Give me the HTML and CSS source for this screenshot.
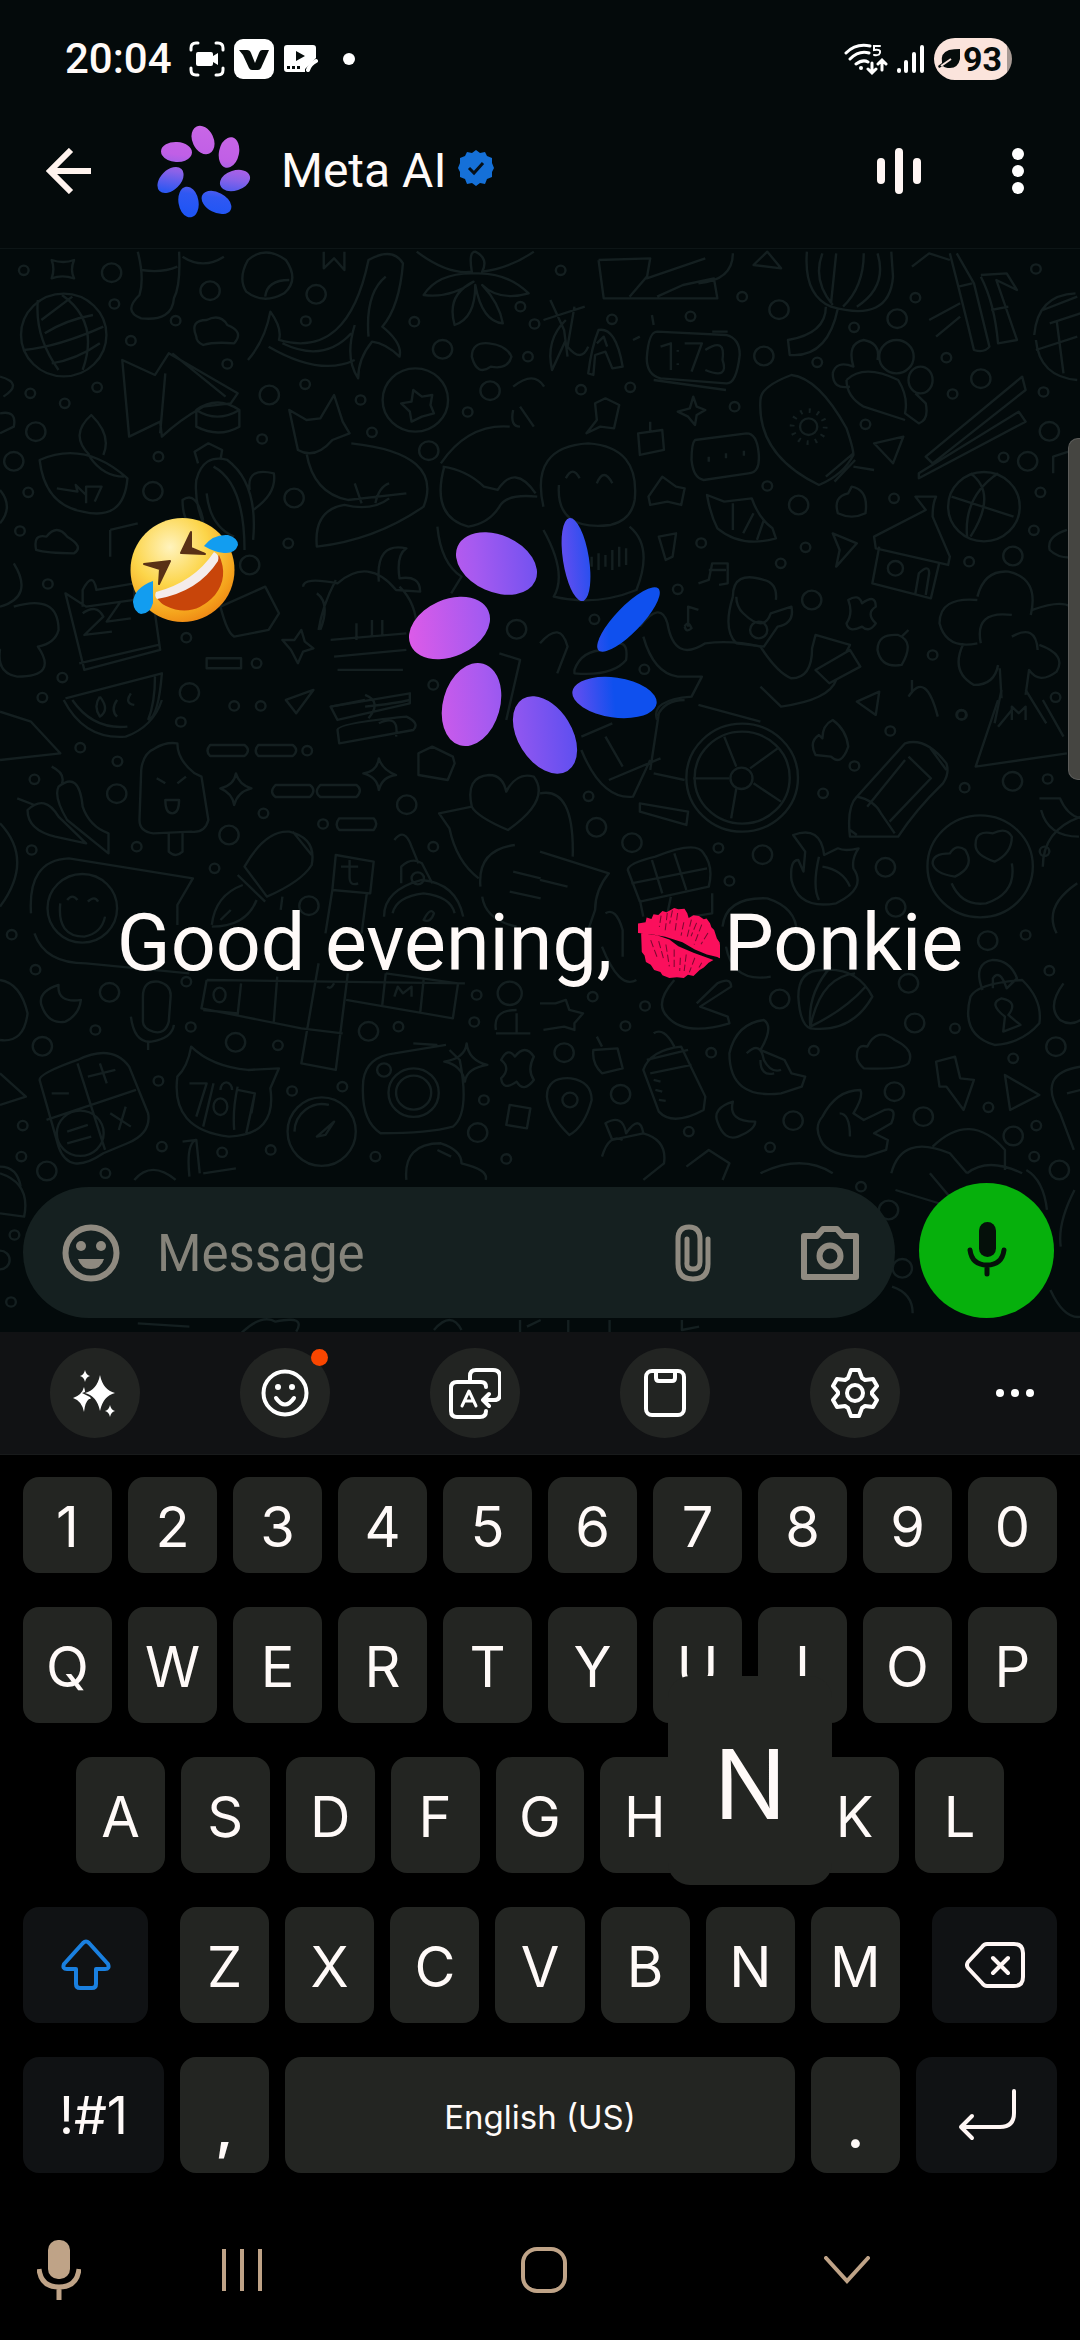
FILE: index.html
```html
<!DOCTYPE html>
<html lang="en">
<head>
<meta charset="utf-8">
<meta name="viewport" content="width=device-width, initial-scale=1">
<title>Meta AI</title>
<link rel="stylesheet" href="styles.css">
</head>
<body>
<div class="status">
  <time class="clock">20:04</time>
  <svg class="rec" viewBox="0 0 36 36" width="36" height="36" fill="none" stroke="#fff" stroke-width="3" stroke-linecap="round"><path d="M2 9V7Q2 2 7 2H9M27 2h2q5 0 5 5v2M34 27v2q0 5-5 5h-2M9 34H7q-5 0-5-5v-2"/><path d="M9 11h13q2 0 2 2v2l5-3v12l-5-3v2q0 2-2 2H9q-2 0-2-2V13q0-2 2-2z" fill="#fff" stroke="none"/></svg>
  <svg class="vbox" viewBox="0 0 40 40" width="40" height="40"><rect width="40" height="40" rx="9" fill="#fff"/><path d="M5 11h8q3 0 4 3l4 10 4-10q1-3 3-3h7l-8 18q-1 2-3 2h-6q-2 0-3-2L9 16z" fill="#060c0b"/></svg>
  <svg class="clip" viewBox="0 0 34 28" width="34" height="28"><path d="M3 0h26q3 0 3 3v10L21 24v3H3q-3 0-3-3V3q0-3 3-3z" fill="#fff"/><path d="M12 6l9 5-9 5zM3 21h3v3H3zM8 21h3v3H8zM13 21h3v3h-3z" fill="#060c0b"/><path d="M24 25q2-6 8-9" fill="none" stroke="#fff" stroke-width="4" stroke-linecap="round"/></svg>
  <span class="more-dot"></span>
  <svg class="wifi" viewBox="0 0 44 34" width="44" height="34" fill="none" stroke="#fff" stroke-width="3" stroke-linecap="round"><path d="M2 11Q12 1 26 4M6 17q9-9 19-6M12 22q7-5 12-2"/><circle cx="17" cy="26" r="2" fill="#fff" stroke="none"/><path d="M28 21v9m-4-3l4 4 4-4M38 28v-9m-4 3l4-4 4 4"/><path d="M36 4h-6v4q5-1 6 1 1 5-6 4" stroke-width="2"/></svg>
  <svg class="signal" viewBox="0 0 28 30" width="28" height="30" stroke="#fff" stroke-width="4" stroke-linecap="round"><path d="M3 26v1M10 18v9M18 10v17M26 3v24"/></svg>
  <span class="battery"><svg viewBox="0 0 22 20" width="22" height="20"><path d="M22 0v10q-2 9-10 9-5 0-7-2l-4 2-1-2 4-3Q2 4 11 1q5-1 11-1z" fill="#060c0b"/><path d="M3 17l10-7" stroke="#fbe4dc" stroke-width="2"/></svg>93</span>
</div>
<header class="appbar">
  <button class="icon-btn" aria-label="Back"><svg viewBox="0 0 46 46" width="46" height="46" fill="none" stroke="#fff3ee" stroke-width="6"><path d="M45 23H5M25 2L4 23l21 21"/></svg></button>
  <svg class="avatar" viewBox="156 124 96 96" width="96" height="96"><defs><linearGradient id="ga" gradientUnits="userSpaceOnUse" x1="215" y1="130" x2="203" y2="216"><stop offset="0" stop-color="#c866e6"/><stop offset=".35" stop-color="#c05fe6"/><stop offset=".55" stop-color="#8a62e8"/><stop offset=".78" stop-color="#2f58f2"/><stop offset="1" stop-color="#1f55f5"/></linearGradient>
    <clipPath id="ca"><ellipse cx="203" cy="141" rx="10.500" ry="15" transform="rotate(-25 203 141)"/><ellipse cx="229" cy="153.500" rx="10" ry="15.500" transform="rotate(12 229 153.500)"/><ellipse cx="235" cy="181.500" rx="15.500" ry="10" transform="rotate(-18 235 181.500)"/><ellipse cx="216.500" cy="203.500" rx="16" ry="10" transform="rotate(28 216.500 203.500)"/><ellipse cx="188.500" cy="203" rx="10" ry="15.500" transform="rotate(-10 188.500 203)"/><ellipse cx="170.500" cy="181" rx="15.500" ry="10" transform="rotate(-45 170.500 181)"/><ellipse cx="176.500" cy="153" rx="15.500" ry="10" transform="rotate(3 176.500 153)"/></clipPath></defs><rect x="156" y="124" width="96" height="96" fill="url(#ga)" clip-path="url(#ca)"/></svg>
  <h1 class="title">Meta AI</h1>
  <svg class="badge" viewBox="0 0 36 38" width="36" height="38"><path d="M18 1l4 3 5-1 2 4 5 2v5l2 5-2 4v5l-5 2-2 5-5-1-4 3-4-3-5 1-2-5-5-2v-5l-2-4 2-5V9l5-2 2-4 5 1z" fill="#1570d8"/><path d="M11 19l5 5 9-10" fill="none" stroke="#061018" stroke-width="3"/></svg>
  <button class="icon-btn push" aria-label="Voice"><svg viewBox="0 0 46 48" width="46" height="48" stroke="#fff6f4" stroke-width="8" stroke-linecap="round"><path d="M5 15v18M23 5v38M41 15v18"/></svg></button>
  <button class="icon-btn kebab" aria-label="More options"><svg viewBox="0 0 12 48" width="12" height="48" fill="#fff"><circle cx="6" cy="7" r="6"/><circle cx="6" cy="24" r="6"/><circle cx="6" cy="41" r="6"/></svg></button>
</header>
<main class="chat">
  <svg class="wallpaper" viewBox="0 249 1080 1083" preserveAspectRatio="xMidYMid slice" aria-hidden="true">
    <defs>
      <marker id="s" markerUnits="userSpaceOnUse" markerWidth="60" markerHeight="60" viewBox="-30 -30 60 60" refX="0" refY="0"><circle r="14" class="doodle"/></marker>
      <marker id="b" markerUnits="userSpaceOnUse" markerWidth="80" markerHeight="80" viewBox="-40 -40 80 80" refX="0" refY="0"><circle r="28" class="doodle"/></marker>
    </defs>
    <g class="doodle" transform="translate(0 240) scale(.3444 .3333)">
      <path class="small" d="M69 91L332 192 510 242 380 302 660 372 888 243 1203 245 1511 200 1552 252 1533 350 88 460 282 442 188 490 886 433 1047 480 1080 577 1358 516 761 597 460 650 82 757 58 873 837 910 139 1032 541 1193 745 1270 181 1313 123 1373 680 1398 757 1398 1258 1335"/>
      <path class="big" d="M324 98L610 152 918 163 1285 328 782 465 1423 452 104 575 1245 632 40 664 444 754 854 774 725 975 550 1358 1500 1168"/>
      <circle cx="185" cy="285" r="124"/><circle cx="1206" cy="480" r="95"/>
      <path d="M150 60q35 12 65 0-12 30 0 55-35-12-65 0 10-28 0-55zM120 240l90-70M130 280q60-40 140-55M70 330q100-10 230-70M150 370q70-10 140-60M110 180q-10 110 60 210M180 165q110 80 60 225M400 35q20 80 5 130-50 50 5 70 90 10 95-60 20-40 15-140M410 90q60 10 105-10M530 50q60 40 120 0"/>
      <path d="M720 60q50-45 110 0 40 60-5 100-60 35-110-5-25-40 5-95zM770 170q5-50 70-50M940 35v50l30-30 30 35V35M570 290q-20-50 30-50 40-20 60 15 50 20 20 55-60-5-90 5-20-10-20-25zM720 360q50-60 65-145 35 50 25 85 200 60 260-240 70-40 100 10-10 130-60 190 60 50 50 90-40-40-80-45-40 50-40 110-40-60-10-160M780 320q150 90 250 40M820 310q120 60 200-30M1070 290q-10-130 50-180"/>
      <path d="M1210 35q90 70 160 60-10-60 10-60 40 20 20 60 80-10 150-60M1370 100q-100 0-140 65 80 10 145-40-80 40-55 130 60-20 60-120 20 110 80 115-10-60-60-115 50 50 135 25-60-60-145-60zM1370 350q0-45 50-40 50 5 65 40-10 40-60 30-40 30-55-30zM1165 490l30-5 5-35 25 20 30-5-5 30 10 25-35 10-30 15-5-30z"/>
      <path d="M355 360l95 45 40-65 200 120-20 30-80 10q-70 40-120 90l-5-45-90 45zM480 400l-15 180M500 340l155 130M570 510q60-45 125 0v50q-60 35-125 0zM570 510q60 40 125 0M115 660q130-60 255 55-10 130-130 100-110-20-125-155zM260 645q-60-60 5-120 60 60 35 120M260 650q40 60 100 60M165 745l60 10-5-20 30 30M250 790v-50h45l-20 45"/>
      <path d="M570 720q20-80 90-60 90 70 75 240M600 760q10 100 80 130M570 720q-10 100 60 200M620 680q90 50 90 250M725 750q-10-70 70-50 10 60-60 110M590 840q-20-90-60-60 0 80 50 90M575 670l-10-35 40-25 40 20-5 30M840 510l50 30 40-5 40-70 25 80 20 35-50 20q-50 60-100 30zM890 640q20 120 120 140l170-20M1020 610q270 30 210 190-140 100-310 120-10-110 80-125 80 20 130-20M1050 790l-20-60M1090 790q10-50 40-60M1280 670q80-120 200-110M1285 680q70 10 120 60l40 10q50-80 110 10M1290 680q-40 150 70 180 60-10 90-60 20-40 110-30M1270 860q10 110 70 150l-30 50"/>
      <path d="M105 930q-10-50 30-40 30-40 60 0 50 30 20 50-80 0-110-10zM320 870l80-20M320 870v80M190 1060l60 40 140-20 60 40 15 110-220 60zM240 1100v-50q30-60 40 0l110-20v60M230 1270l230-55M240 1120q40-30 60 10l-55 55 80-10M350 1085l-40 60 70-10M640 1100l130-60 40 80-30 50-100 20q-20-10-40-90zM880 1040q0-30 100-10 90-80 170 20l70 5q0-50-60-40-10-70 20-90-90-20-80 100M920 1060q40 30 10 110M975 1020q-40 80-50 150M1160 1040q50 50 50 130M960 1200l220-20M970 1250l210-20M980 1290h190M1035 1150v50M1080 1140v50M1110 1140v50"/>
      <path d="M820 1200l35 0 20-30 10 35 25 20-30 10-15 35-20-40zM600 1255h100v30H600zM0 1100q100-30 40-130M40 1100q130-40 130 70-10 40-60 50 60 90-60 90-60-10-50-80-50-40-60 10M190 1375l280-75q-10 130-40 140M450 1310q0 80-20 130M290 1370q-20 30 0 60 30-20 0-60M340 1380q-20 30 0 50M380 1360q-20 30 10 35M830 1380l80-30-50 70zM960 1400l230-40v30l-210 50zM1060 1365q50 20 10 70M1450 1240l60 20-40 180"/>
      <path d="M0 410q70 20 10 60M0 520q50-10 40 40L0 580M0 750q40 50 0 100M1490 440q60-50 90 0M1510 500l40 60M1510 560q-30 0-20-50"/>
    </g>
    <g class="doodle" transform="translate(540 240) scale(.3444 .3333)">
      <path class="small" d="M60 91L587 170 1090 173 1440 87 209 238 437 229 912 262 805 367 1180 353 119 449 262 442 565 500 1198 462 1462 456 945 553 1346 652 660 738 1028 775 1453 757 468 909 771 922 1434 871 1246 965 699 970 400 1048 158 1138 1140 1245 303 1288 1497 1372 1225 1425"/>
      <path class="big" d="M694 209L1037 236 650 348 1280 416 1479 574 1416 664 751 795 1373 948 789 1080"/>
      <path d="M170 60l150-5-10 60 170-60M170 60l15 115h330l-10-60-90 20-75 35M260 170l50-60M560 40q0 80-100 90M620 75l80 10-40-50zM775 35q-10 130 70 165 170 50 180-90l-5-75M820 40q-30 80 30 155M860 40l-15 150M940 40q0 100-60 160M980 40q30 100-60 160M830 200q0 80-110 100l5 45q110 10 140-140M1080 80l50-40 60 20M1190 40q40 160 70 290 30 10 45-10L1260 130l-50-90M1215 140l40-10M1280 110q40 80 50 200l55-10-60-180 60 30-30-50-75 5M1130 240l90-50M1150 290l70-60M1310 210l50-10"/>
      <path d="M10 240l120-40M30 180l40 90 10 80M75 240q-60 60-40 150l40-90M100 200l-20 120q40 50 60 0M140 400q10-80 30-130 50-10 70 110l-30 5-20-50-30 10-5 60zM165 310l20-20 10 30M340 275l200 10q40 10 40 60-10 90-40 85l-190-15q-40-10-40-60 5-80 30-80zM330 420l210 30M500 275h45M350 320l30-10v80M400 330v5M400 370v5M420 310h50l-30 85M480 330q60-40 50 30 20 60-50 30M290 290l-20 10M325 225l5 30"/>
      <path d="M640 480q0-40 90-75 80 10 160 160 20 60 20 80-30 60-100 90-180-90-170-255zM910 640l-80 70M915 660l-60 65M910 680l60 10M755 560a25 25 0 1 1 50 0 25 25 0 1 1-50 0M850 400q10-40 60-20-20-70 30-80 50 10 40 60M850 400q0 50 50 40M985 350a50 50 0 1 1 100 0 50 50 0 1 1-100 0M1070 420a35 40 0 1 1 70 0 35 40 0 1 1-70 0M890 420q50-50 150 0 30 50 20 100l40 30q30-10 20-60l-30-30M890 420q0 50 50 80l120 40M970 610l85-20-30 80zM1120 650l280-240 10 40-270 220zM1100 700l290-185 20 30-310 170z"/>
      <circle cx="780" cy="560" r="48" stroke-dasharray="6 19" stroke-width="14"/>
      <path d="M10 800q-40-180 130-190 150 10 135 170-10 60-70 75-160 20-150-120M75 715q20-40 40 0M165 730q20-50 45 0M160 490l30-15 40 20-15 70-40-5-40 20 30-40zM400 515l35-10 10-35 10 30 25 10-25 15-5 30-20-25zM285 580l70-10 5 60-70 15zM320 545v30M450 600l150-20q30 0 35 60 5 60-30 60l-130 20q-30-5-35-60 0-50 10-60zM490 650v15M540 640v15M592 632v15M315 770l40-60 40 30 25 5-10 50-40-10-50 10zM485 765l50 20 80-10q20 60 60 90l10 30q-100 30-170-30-20-40-30-100zM560 790v80M620 820l-30 60M650 840l-20 60M865 820q-15-50 30-60l10-20q50 10 40 80-40 20-80 0zM850 880l70 30-60 70 10-50z"/>
      <path d="M1185 800a104 104 0 1 1 208 0 104 104 0 1 1-208 0M1195 770l180 60M1250 700q80 60 0 190M1330 700q-100 70-90 190M970 890l150-80-30-40h60q-10 20-10 60l50 120-5 25-210-50zM985 920l-20 110 170 45 25-110M1010 985a22 22 0 1 1 44 0 22 22 0 1 1-44 0M1090 1060l10-60q30-30 30 0l-10 65M1270 1070q20-80 90-75 90 20 65 130M1270 1080q-110-10-110 70 20 80 110 60M1280 1210q-20-100 90-85M1430 1110q80-30 110-10M1370 1190q70-40 75 40M1450 1215q80 30 50 80-50 40-80-5l-10 75M1330 1275q-10 60-70 60-70-40-30-125M1335 1285l5 90"/>
      <path d="M10 870q70 130 30 200 120 30 240-20 50-130-20-190M150 950v30M170 940v50M190 945v35M210 930v60M230 920v60M250 925v50M345 890l50-10-10 70-20 10zM460 1030l30-10 10-50h45v60l-25 5M490 990h50M560 1070q0-80 90-50 40 10 35 60M560 1070q-30 100 10 140l80 10 40-60q50-10 40-60-30 10-60 20-20 60-80 0-20-20-20-50M610 1170a25 25 0 1 1 50 0 25 25 0 1 1-50 0M895 1080q30-20 40 10 40-30 40 10-30 20 0 50-20 30-40 10-40 20-45-10 20-30 5-70zM430 1160v-60l30 10M420 1160q10-20 20 5-15 15-20-5"/>
      <path d="M290 1160q60-80 80-10 20 120 110 60 80-10 160 10 50 80 90 95 60 0 60-90l10-40 100 30-10 20M300 1190q30 110 100 120h70l-30 60q-120 10-100 70M640 1340l60 60q140-20 160-80M800 1290l100-60 30 50-90 50zM980 1230q0-50 60-45 50 20 10 90-60 10-70-45zM1050 1190l20-20M920 1385l65-30-10 70zM1070 1370q50-80 85 60M1080 1320v40M1340 1350l-20 100M1410 1350l60 100M1370 1440v-40l20 20 20-20v40M460 1395l180 50M100 1290q20-60 90-60 70-50 60 30-40 50-150 40zM0 1210q60-70 80 10l-30 80"/>
      <path d="M1435 285q10-120 120-125M1440 300q10 110 120 120M1460 210l100-40M1480 250l90-30M1440 330l120-40M1500 240l20 160M1490 700v-50l60-20M1530 870q-60 20-50 60 30 30 80 20"/>
    </g>
    <g class="doodle" transform="translate(0 700) scale(.3444 .3333)">
      <path class="small" d="M525 66L233 143 341 184 892 152 100 238 938 372 765 340 92 450 397 440 1258 440 623 505 34 704 103 809 541 845 277 990 554 981 1384 885 1377 966 1157 980 807 1036 460 1143 848 1173 994 1160 1405 1200 66 1277 470 1340 645 1357 786 1350 1090 1370 62 1370 1470 1377 306 1420"/>
      <path class="big" d="M339 281L665 405 1181 314 897 617 318 877 684 1027 1070 994 123 1039 1387 1298 136 1413"/>
      <path d="M185 0q60 120 180 110 80-30 105-110M210 0q60 90 160 80M0 35l90 30 85 95-175 20M450 145q30-20 65-15 0 50 50 90l20 10 20 130q-10 40-50 35l-110 5q-40-5-40-40l5-150q5-50 40-65zM490 395v60q20 20 40 0v-60M455 235l25 15M540 230l-25 20M480 300h40q0 40-20 40t-20-40zM610 135h100q20 15 0 33H610q-15-15 0-33zM750 135h100q20 15 0 33H750q-15-15 0-33zM800 255h100q20 15 0 36H800q-20-15 0-36zM930 255h105q20 15 0 36H930q-20-15 0-36zM985 355h100q15 15 0 35H985q-15-15 0-35z"/>
      <path d="M640 265q40-10 45-45 10 35 45 45-40 10-50 50-5-35-40-50zM1055 220q40-5 45-45 10 35 50 50-40 5-50 45-5-40-45-50zM1215 160l40-20 60 30 5 20-20 50-85-15zM1370 320q-20-90 50-95 40 0 50 50 30-60 80-45 50 70-75 160-90-40-105-70zM1370 320l-95 20 30 45q20 100 85 150M980 90q0-20 200-40 40 20 20 40l-215 40zM1100 70q60-30 50 40M960 20l100-20M1060 20q90-10 130-20"/>
      <path d="M90 640q-10-160 110-165l360 60-45 80 0 60M100 700q30 90 150 90l300 30M138 625a101 103 0 1 1 202 0 101 103 0 1 1-202 0M175 610q-10 100 70 100 50-10 60-60M195 600q15-20 30 0M255 605q20-20 30 0M80 330q50-50 90 20l80 80-90-20q-80-20-80-80zM170 260q60-50 70 60 20 60 75 80v60l-120-100q-40-70-25-100zM150 200q40 20 30 50M50 295l50 20M710 500q60-110 130-105 80 20 65 100-30 50-130 95zM850 395l55 70M690 525l80 80M615 675q10-90 90-120M615 680q100 0 130-80M640 660l30-30M820 590l-5 40"/>
      <path d="M975 465l110 20-10 95-110-10zM965 570l-20 130M1065 580l-15 120M600 840l750 10M590 930l100 10M600 840l-15 85 290 60 120 15M700 850l-10 95M805 830l-10 135M925 790l-50 300 100 20 35-290M1120 820l210 30-15 105-310-55M1120 820l-10 95M1230 840l-10 100M990 500h50M1015 480v50q0 30 25 20M970 850q-10 20-20 10M1145 890l10-30 15 20 25-20v30M620 885a16 20 0 1 1 35 0 16 20 0 1 1-35 0M1115 650q0-80 110-110 100 10 120 110M1140 640q10-50 90-60 80 10 90 60M1165 550v-50q30-30 60-10l30 60M1195 535a18 18 0 1 1 36 0 18 18 0 1 1-36 0M1145 420q30-40 50 20l20 50M1230 660q20-40 30-20-10 30-30 20zM1395 560q-10-110 100-125M1400 590q10 70 100 90M1490 515l80 20M1480 575l90 20"/>
      <path d="M170 855q-60 20-50 60 20 60 70 50 40-20 45-65-70 10-65-45zM0 840q60 10 80 100-10 90-80 80M415 890q0-50 45-45 40 10 35 50l-5 70q-10 40-45 30-30-10-30-30zM380 950q10 80 60 75 60-10 65-50M430 1025v25M115 1140q0-20 110-60 100-50 150 20l55 140q10 60-60 90l-70 30q-100 70-130-20zM225 1090l80 260M135 1260l260-90M255 1130l80-20M290 1090l20 60M150 1180h50M320 1240l60 40M365 1220l-20 70M165 1300a68 68 0 1 1 136 0 68 68 0 1 1-136 0M195 1295l60-20M195 1330l70-20M0 1120l75 70-75 25"/>
      <path d="M555 1040q60 60 165 70l90-5-25 60q20 140-120 145-170-20-150-180 30-30 40-90zM550 1150h50l-30 100M620 1150l-30 130M690 1160q-15 70-10 130M690 1170l50 10-25 120M740 1180l-10 60M640 1170a15 20 0 1 1 34 0M620 1220a20 25 0 1 1 40 0 20 25 0 1 1-40 0M835 1295a99 103 0 1 1 198 0 99 103 0 1 1-198 0M855 1295a80 85 0 0 1 100-80M920 1310l50-45-25 40zM1055 1140q10-70 90-80l150-25M1055 1140q-10 120 50 160 140 0 210-20 50-40 20-200l-30-30M1200 1030l70 5M1128 1178a73 73 0 1 1 146 0 73 73 0 1 1-146 0M1150 1178a51 51 0 1 1 102 0 51 51 0 1 1-102 0M1095 1110a20 20 0 1 1 40 0 20 20 0 1 1-40 0M1290 1085q60-10 65-55 5 50 60 65-60 10-65 50-10-50-60-60z"/>
      <path d="M1455 1080q20-40 40-10 30-40 55 0-20 40 0 70-30 40-50 5-40 30-45-10 30-30 0-55zM1480 1215l60 10-10 60-60-10zM1445 880a35 35 0 1 1 70 0 35 35 0 1 1-70 0M1440 990q-10-60 60-60M1440 1000h100M1500 940v60M1180 1440q-10-110 100-110 60 20 60 60 80 20 70 50M1270 1350l40 20M530 1325l40-5 10 100M550 1430q-10-100 20-110M390 1440q50-60 120 0M590 1420l95-15M0 1400q50 0 60 60M0 370q100 110 0 250"/>
    </g>
    <g class="doodle" transform="translate(540 700) scale(.3444 .3333)">
      <path class="small" d="M1223 44L1017 93 913 198 822 280 1233 263 1474 237 141 289 518 444 1465 454 550 543 1410 705 1479 812 153 890 305 918 248 978 497 1058 795 1052 1205 985 1374 1075 1302 1222 432 1295 668 1342 1441 1277 1435 1370"/>
      <path class="big" d="M1372 244L164 382 267 428 646 464 1003 502 1300 722 696 897 1088 969 1498 1040 70 1058 234 1183 735 1262 1113 1250 1374 1308 1070 850 1029 1175 1508 1410 1033 622"/>
      <circle cx="587" cy="233" r="162"/><circle cx="587" cy="233" r="138"/><circle cx="585" cy="235" r="32"/><circle cx="1278" cy="499" r="153"/>
      <path d="M570 200l-35-90M610 205l80-60M620 250l80 55M570 265l-15 90M550 235H445M800 165q-20-40 10-60l10 10q0-40 30-55 40 30 45 80-20 60-50 30zM340 50q20-50 80-50M345 40l-25 170M120 150q60 150 150 140l50-110M200 240l150-65M190 110l50 90M330 220l90 20M290 310l140 25-5 40-135-40zM120 110l90-40M1060 130q60-20 120 60 10 30-10 60-80 80-130 160H900q-10-90 20-120zM920 290q50 10 70 50l40 60M1070 170l65 65-120 130M950 320l110-140M1130 140l50 70M900 390l20 15M1330 0l-65 200 265-40M1330 80l40-50M1460 0l60 110M1450 295h60q20 50 60 60M1455 330q20 80 110 80"/>
      <path d="M1140 490q0-30 50-30 20-30 45-10 30 50-30 80-60-10-65-40zM1265 430q0-40 50-30 40-20 55 10 0 50-50 75-60-20-55-55zM1195 550q30 70 100 60 90-30 75-120M735 405q80-30 90 60 20-10 40-20 20 10 60 0-20 30-15 60 40 60-50 105-110 20-130-70-5-60 20-60l15 35 5-60zM810 470q-20 90 0 130M820 500q60 10 80 60M255 510q0-20 80-40 120-50 140-10 30 40 15 100l-200 45zM325 480l30 100M390 460l35 110M265 550l220-45M290 600l10 50M380 590l-10 50M500 580v60l-60 10M0 280q100-20 95 190M0 455l200 65q-40 50-40 110l-20 60M0 540l80 20M530 680q10-90 130-85 90 30 85 110M540 740q20 110 130 90"/>
      <path d="M190 640q30-20 50 50v80M180 740q50 130 100 100M390 840q-60 70-20 110 50 60 180 20l-5-20-80-30 90-60q0-30-40-10l-60 60M750 890q0-80 70-80 100-10 145 80-60 110-180 95-30-10-35-95zM785 980q-10-100 60-180M785 980q100-50 160-120M785 980q30-150 130-160M1285 870q-30-80 30-90 50 0 70 55l-30 30q-20-60-40-30v30M1250 890q20-40 150-50 60 60 50 130-50 60-130 65-100-30-70-145zM1350 950q-50-40-10-55 50 10 20 50l35 30-50 20zM1570 350q-110 40-110 150M1500 700q-40-80 60-150M1520 850q-50 70-10 110 30 20 60 0M0 910l45 0 30-10 10 30 40 10-25 30 0 20-30-10-60 10"/>
      <path d="M920 1070q0-40 30-30 30-60 80-20 60 30 40 70-20 20-130 15-20-20-20-35zM550 1060q20-90 100-100 30 20-10 90l70 30 20 40 40 10-10 30-60 20q-150 20-150-120zM600 1060q40-40 50 20 20 40 50 30M640 1080q0 50 40 40M820 1250q40-80 110-80 10 20-20 70l30 20 60-30q40-10 20 40l-50 30 40 20-5 30-60 20q-110 0-130-50-20-40 5-70zM870 1240q30 0 30 70M1150 1085l55-15 15 65 40 5-30 90-50-70h-20zM1350 1125l100 60-85 45zM155 1050l70-5 15 60-60 15q-30-30-25-70zM165 1010l15 30M300 1110q20-60 110-70l70 150-5 40q-90 50-130 5zM310 1080l120-30M320 1120l120-25M330 1000q30-20 60 40M330 1140l20 5M335 1170l20 5M345 1200l20 3"/>
      <path d="M20 1190q0-60 70-55 60 10 60 65-20 80-65 105-60-60-65-115zM65 1200a22 22 0 1 1 44 0 22 22 0 1 1-44 0M560 1205q-60 20-45 60 20 60 60 45 50-20 50-45-80 0-65-60zM190 1270q50-30 60 30 40-60 50 0l-90 20zM180 1370q20-70 60-50M300 1300q70 20 60 90l-60 50M425 1400l65-50 60 40-20 50M1020 1420q30-120 170-60l50 60M1140 1340q110-110 210 10v60M640 1420q120-60 210 0M1570 1100q-130 20-60 140l40 110M1530 1180l40-10M1240 1420q60-50 160 0"/>
    </g>
    <g class="doodle" transform="translate(0 1170) scale(.3444 .3333)">
      <path class="small" d="M42 195L32 396 2500 50"/><path class="big" d="M0 270L2580 120 2620 295"/>
      <path d="M0 10q90 30 70 130l-70-10M400 460l150 10M700 490q60-60 100-35 90-20 60 30M2590 350q60 20 60 80M2600 60l190 60-90-110M2980 0q50 30 60 120M3120 60q-50 100-40 170M3050 360q40 90 90 80M1260 480q50-60 80 0M1510 450v40M1530 470l40-20M1650 450v40M1770 450v40M1980 450v30l50-10"/>
    </g>
  </svg>
  <section class="hero">
    <div class="hero-art">
      <svg class="rofl" viewBox="128 515 112 110" width="112" height="110" role="img" aria-label="Rolling on the floor laughing"><defs><radialGradient id="gf" cx=".38" cy=".28" r=".8"><stop offset="0" stop-color="#fff3bd"/><stop offset=".45" stop-color="#fcd54a"/><stop offset=".8" stop-color="#f5a31c"/><stop offset="1" stop-color="#ec7f12"/></radialGradient></defs><circle cx="182.500" cy="570" r="52" fill="url(#gf)"/><path d="M157 598Q200 590 219 555q10 22-4 40-22 24-49 11-6-3-9-8z" fill="#c8450a"/><path d="M156 592Q194 582 214 552q6 3 4 9-20 31-61 38-3-3-1-7z" fill="#f4ecea"/><path d="M191 532l-10 21 24 1-14-6zM144 564l26-3-11 23 1-15z" fill="#593116" stroke="#593116" stroke-width="2" stroke-linejoin="round"/><path d="M204 546q9-12 24-11 10 3 10 10-3 9-14 8-10-1-20-7zM153 581q-19 7-20 21 1 10 8 12 9 0 12-11z" fill="#129df0"/></svg>
      <svg class="bloom" viewBox="400 510 280 280" width="280" height="280" role="img" aria-label="Meta AI logo"><defs><linearGradient id="gb" gradientUnits="userSpaceOnUse" x1="409" y1="640" x2="635" y2="620"><stop offset="0" stop-color="#dc5be8"/><stop offset=".32" stop-color="#a65af0"/><stop offset=".72" stop-color="#5a4ef0"/><stop offset=".88" stop-color="#0f50ee"/></linearGradient>
        <clipPath id="cb"><ellipse cx="576" cy="559.500" rx="13" ry="42" transform="rotate(-9 576 559.500)"/><ellipse cx="628.500" cy="619.500" rx="43" ry="13" transform="rotate(-46 628.500 619.500)"/><ellipse cx="614.500" cy="697.500" rx="42.500" ry="20" transform="rotate(8 614.500 697.500)"/><ellipse cx="545" cy="735" rx="27" ry="42.500" transform="rotate(-32 545 735)"/><ellipse cx="471.500" cy="704.500" rx="28.500" ry="42.500" transform="rotate(16 471.500 704.500)"/><ellipse cx="449.500" cy="628" rx="42.500" ry="28.500" transform="rotate(-24 449.500 628)"/><ellipse cx="496.500" cy="563.500" rx="42.500" ry="28.500" transform="rotate(24 496.500 563.500)"/></clipPath></defs><rect x="400" y="510" width="280" height="280" fill="url(#gb)" clip-path="url(#cb)"/></svg>
    </div>
    <p class="greeting">Good evening, <svg class="lips" viewBox="285 625 238 211" preserveAspectRatio="none" role="img" aria-label="Kiss mark"><path d="M285 672l22-4 3-14 14 4 6-14 14 2 12-12 12 4 22-13 12 4 18-2 8 14 4 14 14-8 16 2 14 10 8-2 10 14 4 12 8 8 8 26 8 12 3 28 10 20q-10 2-20-4l-30-8-35-15-36-22-50-16-40-8-44-4zM294 700l48 8 34 12 26 20 44 20 58 22-14 8-14 14-12 8-18 18-16-4-12 10-20-2-22 2-20-8-6-10-18-6-10-16-14-8-4-20-8-10z" fill="#fb0f5c"/><path d="M352 648l-5 34M370 640l-6 52M385 632l-8 40M400 640l-8 60M418 668l-8 40M440 660l-14 60M455 670l-16 40M470 675l-22 60M488 700l-20 34M322 722l18 50M345 725l16 60M366 735l10 66M390 750v54M408 775l-2 40M425 765l-6 50M450 775l-16 44M470 790l-8 14" stroke="#7a0a30" stroke-width="3" stroke-dasharray="22 9"/></svg>Ponkie</p>
  </section>
  <form class="composer">
    <div class="pill">
      <button type="button" class="icon-btn" aria-label="Emoji"><svg viewBox="0 0 58 58" width="58" height="58"><circle cx="29" cy="29" r="25.500" fill="none" stroke="#8f8a80" stroke-width="6"/><circle cx="19" cy="22" r="5" fill="#8f8a80"/><circle cx="39" cy="22" r="5" fill="#8f8a80"/><path d="M16 35h26q-3 10-13 10T16 35z" fill="#8f8a80"/></svg></button>
      <input class="field" type="text" placeholder="Message" aria-label="Message">
      <button type="button" class="icon-btn attach" aria-label="Attach"><svg viewBox="0 0 36 58" width="36" height="58" fill="none" stroke="#8f8a80" stroke-width="5" stroke-linecap="round"><path d="M33 15v25q0 15-15 15T3 40V15Q3 3 14 3t11 12v23q0 7-7 7t-6-7V15"/></svg></button>
      <button type="button" class="icon-btn" aria-label="Camera"><svg viewBox="0 0 58 54" width="58" height="54" fill="none" stroke="#8f8a80" stroke-width="6" stroke-linejoin="round"><path d="M3 10h13l6-7h14l6 7h13v41H3z"/><circle cx="29" cy="30" r="10.500"/></svg></button>
    </div>
    <button type="button" class="mic" aria-label="Record voice message"><svg viewBox="0 0 40 56" width="40" height="56" fill="none" stroke="#05100a" stroke-width="5" stroke-linecap="round"><rect x="12" y="1" width="17" height="35" rx="8.500" fill="#05100a" stroke="none"/><path d="M3 29q2 15 17 15t17-15M20 44v9"/></svg></button>
  </form>
  <span class="edge-handle"></span>
</main>
<section class="keyboard" aria-label="Keyboard">
  <div class="tools">
    <button class="tool" aria-label="AI tools"><svg viewBox="0 0 48 48" width="48" height="48" fill="#fff"><path d="M29 6q3 15 15 18-12 3-15 18-3-15-15-18 12-3 15-18zM13 18q1 3 1 5l-3 1 8 4q2 2-1 2-4 3-5 13-2-11-11-14 9-3 11-11zM14 1q1 5 5 6-4 1-5 6-1-5-5-6 4-1 5-6zM39 36q1 5 5 6-4 1-5 6-1-5-5-6 4-1 5-6z"/></svg></button>
    <button class="tool" aria-label="Emoji keyboard"><svg viewBox="0 0 48 48" width="48" height="48" fill="none" stroke="#fff" stroke-width="4" stroke-linecap="round"><circle cx="24" cy="24" r="21.500"/><path d="M15 29q9 13 18 0"/><circle cx="17" cy="18" r="3" fill="#fff" stroke="none"/><circle cx="31" cy="18" r="3" fill="#fff" stroke="none"/></svg><span class="dot"></span></button>
    <button class="tool" aria-label="Translate"><svg viewBox="0 0 52 52" width="52" height="52" fill="none" stroke="#fff" stroke-width="4" stroke-linecap="round" stroke-linejoin="round"><path d="M37 20q0-5-5-5H8q-6 0-6 6v23q0 6 6 6h23q6 0 6-6M21 14V9q0-6 6-6h17q7 0 7 7v17q0 6-6 6H36M40 27l-6 6 6 6"/><path d="M13 39l7-15 7 15M16 34h8" stroke-width="3"/></svg></button>
    <button class="tool" aria-label="Clipboard"><svg viewBox="0 0 42 50" width="42" height="50" fill="none" stroke="#fff" stroke-width="4"><rect x="2" y="3" width="38" height="44" rx="6"/><path d="M12 3v7q0 3 3 3h13q3 0 3-3V3"/></svg></button>
    <button class="tool" aria-label="Settings"><svg viewBox="0 0 48 50" width="48" height="50" fill="none" stroke="#fff" stroke-width="4" stroke-linejoin="round"><path d="M20 2h8l3 8 3 2 8-1 4 7-5 6v2l5 6-4 7-8-1-3 2-3 8h-8l-3-8-3-2-8 1-4-7 5-6v-2l-5-6 4-7 8 1 3-2z"/><circle cx="24" cy="25" r="8"/></svg></button>
    <button class="tool plain" aria-label="More"><svg viewBox="0 0 40 10" width="40" height="10" fill="#fff"><circle cx="5" cy="5" r="4"/><circle cx="20" cy="5" r="4"/><circle cx="35" cy="5" r="4"/></svg></button>
  </div>
  <div class="keys">
    <div class="row digits"><button class="key">1</button><button class="key">2</button><button class="key">3</button><button class="key">4</button><button class="key">5</button><button class="key">6</button><button class="key">7</button><button class="key">8</button><button class="key">9</button><button class="key">0</button></div>
    <div class="row"><button class="key">Q</button><button class="key">W</button><button class="key">E</button><button class="key">R</button><button class="key">T</button><button class="key">Y</button><button class="key">U</button><button class="key">I</button><button class="key">O</button><button class="key">P</button></div>
    <div class="row home-row"><button class="key">A</button><button class="key">S</button><button class="key">D</button><button class="key">F</button><button class="key">G</button><button class="key">H</button><button class="key" aria-label="J"></button><button class="key">K</button><button class="key">L</button></div>
    <div class="row shift-row">
      <button class="key dark" aria-label="Shift"><svg viewBox="0 0 50 52" width="50" height="52" fill="none" stroke="#1a80e0" stroke-width="4" stroke-linejoin="round"><path d="M22 4q3-3 6 0l19 21q2 5-3 5h-9v15q0 4-4 4H19q-4 0-4-4V30H6q-5 0-3-5z"/></svg></button>
      <div class="row letters"><button class="key">Z</button><button class="key">X</button><button class="key">C</button><button class="key">V</button><button class="key">B</button><button class="key">N<span class="popup">N</span></button><button class="key">M</button></div>
      <button class="key dark" aria-label="Backspace"><svg viewBox="0 0 60 46" width="60" height="46" fill="none" stroke="#fff6f4" stroke-width="4" stroke-linecap="round" stroke-linejoin="round"><path d="M22 2h27q9 0 9 9v24q0 9-9 9H22q-3 0-5-3L3 26q-2-3 0-6L17 5q2-3 5-3zM28 16l15 15M43 16L28 31"/></svg></button>
    </div>
    <div class="row space-row">
      <button class="key dark sym">!#1</button><button class="key low">,</button><button class="key space">English (US)</button><button class="key low">.</button>
      <button class="key dark" aria-label="Enter"><svg viewBox="0 0 58 52" width="58" height="52" fill="none" stroke="#fff6f4" stroke-width="4" stroke-linecap="round" stroke-linejoin="round"><path d="M56 2v22q0 14-14 14H3M14 27L3 38l11 11"/></svg></button>
    </div>
  </div>
</section>
<nav class="sysnav">
  <button class="icon-btn voice" aria-label="Voice input"><svg viewBox="0 0 44 60" width="44" height="60" fill="none" stroke="#bfa387" stroke-width="5"><rect x="11" y="0" width="22" height="39" rx="10" fill="#bfa387" stroke="none"/><path d="M2 29q2 18 20 18t20-18M22 47v13"/></svg></button>
  <button class="icon-btn slot" aria-label="Recents"><svg viewBox="0 0 42 44" width="42" height="44" stroke="#bfa387" stroke-width="4"><path d="M3 1v42M21 1v42M39 1v42"/></svg></button>
  <button class="icon-btn slot" aria-label="Home"><svg viewBox="0 0 46 46" width="46" height="46" fill="none" stroke="#bfa387" stroke-width="4"><rect x="2" y="2" width="42" height="42" rx="14"/></svg></button>
  <button class="icon-btn slot" aria-label="Hide keyboard"><svg viewBox="0 0 46 28" width="46" height="28" fill="none" stroke="#bfa387" stroke-width="4" stroke-linecap="round"><path d="M2 2l21 23L44 2"/></svg></button>
</nav>
</body>
</html>
```
FILE: styles.css
```css
* { box-sizing: border-box; }

body {
  margin: 0;
  min-height: 100vh;
  display: flex;
  flex-direction: column;
  background: #040a0b;
  color: #fffaf8;
  font-family: Roboto, "Noto Sans", sans-serif;
}

svg { display: block; flex: none; }

button {
  margin: 0;
  padding: 0;
  border: 0;
  background: none;
  color: inherit;
  font: inherit;
}

.icon-btn {
  display: flex;
  align-items: center;
  flex: none;
}

/* Status bar */
.status {
  display: flex;
  align-items: center;
  height: 118px;
  padding: 0 68px 0 65px;
}

.clock { font-size: 42px; line-height: 48px; font-weight: 500; }
.rec { margin-left: 17px; }
.vbox { margin-left: 9px; }
.clip { margin-left: 10px; }
.more-dot { width: 12px; height: 12px; margin-left: 25px; border-radius: 50%; background: #fff; }
.wifi { margin-left: auto; }
.signal { margin: 0 10px 0 8px; }

.battery {
  display: flex;
  align-items: center;
  justify-content: center;
  gap: 3px;
  width: 78px;
  height: 42px;
  padding-right: 6px;
  border-radius: 21px;
  background: linear-gradient(90deg, #fbe4dc 93%, #a89a94 93%);
  color: #060c0b;
  font-size: 34px;
  line-height: 40px;
  font-weight: 700;
}

/* App bar */
.appbar {
  display: flex;
  align-items: center;
  height: 131px;
  padding: 0 56px 25px 46px;
  border-bottom: 1px solid #0d1516;
}

.avatar { margin-left: 64px; }
.title { margin: 0 12px 0 29px; font-size: 48px; line-height: 56px; font-weight: 400; }
.badge { margin-bottom: 6px; }
.push { margin-left: auto; }
.kebab { margin-left: 90px; }

/* Conversation */
.chat {
  position: relative;
  flex: 1;
  display: flex;
  flex-direction: column;
  justify-content: space-between;
  padding: 261px 0 14px;
  background: #030a0b;
}

.wallpaper { position: absolute; inset: 0; width: 100%; height: 100%; }

.doodle { fill: none; stroke: #141f20; stroke-width: 7; stroke-linejoin: round; }
.small { stroke: none; marker: url(#s); }
.big { stroke: none; marker: url(#b); }

.hero { position: relative; }

.hero-art {
  display: grid;
  grid-template-columns: 1fr 280px 1fr;
  align-items: start;
}

.rofl { margin: 5px 0 0 128px; }

.greeting {
  margin: 107px 0 0;
  font-size: 79px;
  line-height: 92px;
  text-align: center;
  white-space: nowrap;
}

.lips {
  display: inline-block;
  width: 82px;
  height: 70px;
  margin: 0 4px 0 6px;
  vertical-align: -8px;
}

.composer {
  position: relative;
  display: flex;
  align-items: flex-end;
  gap: 24px;
  padding: 0 26px 0 23px;
}

.pill {
  display: flex;
  align-items: center;
  flex: 1;
  min-width: 0;
  height: 131px;
  padding: 0 36px 0 39px;
  border-radius: 66px;
  background: #152020;
}

.field {
  flex: 1;
  min-width: 0;
  height: 80px;
  margin: 0 20px 0 37px;
  padding: 2px 0 0;
  border: 0;
  outline: 0;
  background: none;
  color: #fffaf8;
  font: 400 51px/60px Roboto, "Noto Sans", sans-serif;
}

.field::placeholder { color: #85837a; opacity: 1; }
.attach { margin-right: 90px; }

.mic {
  display: flex;
  align-items: center;
  justify-content: center;
  width: 135px;
  height: 135px;
  padding-bottom: 4px;
  border-radius: 50%;
  background: #06b00c;
}

.edge-handle {
  position: absolute;
  top: 189px;
  right: 0;
  width: 12px;
  height: 342px;
  border: 1px solid #5c5c5a;
  border-right: 0;
  border-radius: 10px 0 0 10px;
  background: #454541;
}

/* Keyboard */
.keyboard { background: #000; }

.tools {
  display: flex;
  align-items: center;
  justify-content: space-between;
  height: 123px;
  padding: 0 20px 0 50px;
  border-bottom: 1px solid #181a1b;
  background: #111214;
}

.tool {
  position: relative;
  display: flex;
  align-items: center;
  justify-content: center;
  width: 90px;
  height: 90px;
  border-radius: 50%;
  background: #222422;
}

.plain { width: 70px; margin-left: -10px; padding-right: 20px; background: none; }

.dot {
  position: absolute;
  top: 1px;
  right: 2px;
  width: 17px;
  height: 17px;
  border-radius: 50%;
  background: #fa4600;
}

.keys {
  display: flex;
  flex-direction: column;
  gap: 34px;
  padding: 22px 23px 27px;
  font-family: Inter, Roboto, sans-serif;
}

.row { display: flex; gap: 16px; height: 116px; }
.digits { height: 96px; }
.home-row { padding: 0 53px; }

.key {
  position: relative;
  display: flex;
  align-items: center;
  justify-content: center;
  flex: 1 1 0;
  min-width: 0;
  padding-top: 3px;
  border-radius: 16px;
  background: #232522;
  font-size: 56px;
  line-height: 68px;
}

.dark { background: #101214; padding-top: 0; }

.shift-row {
  display: grid;
  grid-template-columns: 125fr 720fr 125fr;
  gap: 32px;
}

.space-row {
  display: grid;
  grid-template-columns: 141fr 89fr 510fr 89fr 141fr;
}

.sym { padding-top: 2px; font-size: 52px; }
.space { font-size: 33px; }
.low { padding-top: 26px; font-weight: 600; }

.popup {
  position: absolute;
  z-index: 1;
  left: 50%;
  bottom: calc(100% + 22px);
  display: flex;
  align-items: center;
  justify-content: center;
  width: 164px;
  height: 209px;
  margin-left: -82px;
  padding-top: 6px;
  border-radius: 22px;
  background: #232522;
  font-size: 96px;
  line-height: 116px;
}

/* System navigation */
.sysnav {
  display: flex;
  align-items: center;
  height: 140px;
  padding: 0 82px 0 37px;
  background: #000;
}

.voice { width: 54px; }
.slot { flex: 1; justify-content: center; }
```
